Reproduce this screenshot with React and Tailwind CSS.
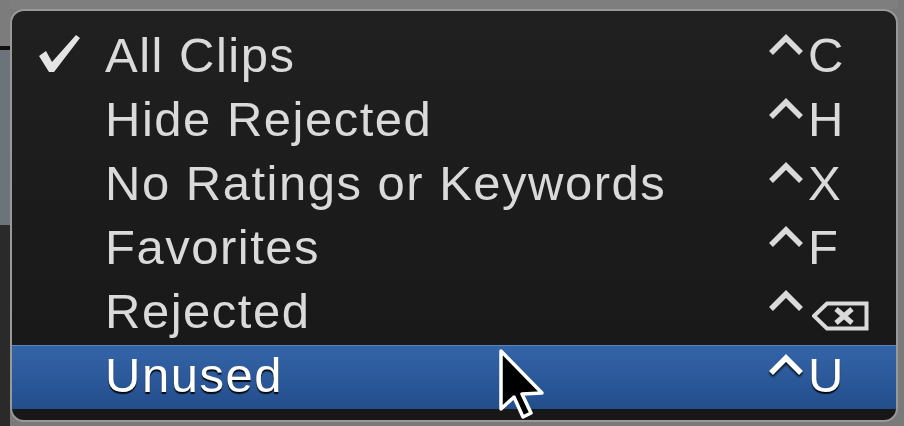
import React from "react";

const font = { fontFamily: '"Liberation Sans", Arial, sans-serif' };

function Caret() {
  return (
    <svg width="36" height="22" viewBox="0 0 36 22" className="block">
      <path d="M3 19 L18 4 L33 19" fill="none" stroke="currentColor" strokeWidth="5.5" strokeLinejoin="miter" />
    </svg>
  );
}

function DeleteKey() {
  return (
    <svg width="58" height="30" viewBox="0 0 58 30" className="block">
      <path d="M2 15 L15 2.5 L54.5 2.5 L54.5 27.5 L15 27.5 Z" fill="none" stroke="currentColor" strokeWidth="4" strokeLinejoin="miter" />
      <path d="M24 8 L40 22 M40 8 L24 22" fill="none" stroke="currentColor" strokeWidth="5" />
    </svg>
  );
}

function Check() {
  return (
    <svg width="44" height="44" viewBox="0 0 44 44" className="block">
      <path d="M1 22 L8 17 L14 28 L38 1 L42 4 L16 38 L11 38 Z" fill="#e4e4e4" />
    </svg>
  );
}

function Row({ label, keyNode, checked, selected }) {
  return (
    <div
      className={
        "flex h-[64px] items-start " +
        (selected
          ? "bg-gradient-to-b from-[#3464a8] to-[#234e8c] border-t border-[#5f84bc] text-white"
          : "text-[#dadada]")
      }
    >
      <div className="w-[93px] shrink-0 flex items-start pl-[26px] pt-[9px]">
        {checked ? <Check /> : null}
      </div>
      <div
        className={"flex-1 text-[49px] leading-[60px] tracking-[1.5px] whitespace-nowrap " + (selected ? "-mt-px" : "")}
        style={selected ? { textShadow: "0 2px 1px rgba(0,0,0,0.9)" } : undefined}
      >
        {label}
      </div>
      <div className={"w-[128px] shrink-0 flex items-start " + (selected ? "-mt-px" : "")}>
        <div className="pt-[9px] w-[40px]" style={selected ? { filter: "drop-shadow(0 2px 1px rgba(0,0,0,0.9))" } : undefined}>
          <Caret />
        </div>
        <div
          className="text-[49px] leading-[60px]"
          style={selected ? { textShadow: "0 2px 1px rgba(0,0,0,0.9)" } : undefined}
        >
          {keyNode}
        </div>
      </div>
    </div>
  );
}

export default function App() {
  const rows = [
    { label: "All Clips", key: "C", checked: true },
    { label: "Hide Rejected", key: "H" },
    { label: "No Ratings or Keywords", key: "X" },
    { label: "Favorites", key: "F" },
    { label: "Rejected", key: "del" },
    { label: "Unused", key: "U", selected: true },
  ];
  return (
    <div className="w-[904px] h-[426px] overflow-hidden bg-[#7a7a7a] flex" style={font}>
      <div className="w-[10px] shrink-0 flex flex-col">
        <div className="h-[46px] bg-[#7c7c7c]" />
        <div className="h-[4px] bg-[#101010]" />
        <div className="h-[175px] bg-[#6c737b]" />
        <div className="flex-1 bg-[#2a2a2a]" />
      </div>
      <div className="flex flex-col">
        <div className="h-[9px] bg-[#7e7e7e]" />
        <div className="relative w-[888px] h-[413px] rounded-[14px] border-2 border-[#999999] bg-gradient-to-b from-[#202020] to-[#171717] overflow-hidden pt-[14px] pb-[11px]">
          {rows.map((r) => (
            <Row
              key={r.label}
              label={r.label}
              checked={r.checked}
              selected={r.selected}
              keyNode={r.key === "del" ? <div className="pt-[20px] ml-[4px]"><DeleteKey /></div> : r.key}
            />
          ))}
          <svg
            className="absolute left-[486px] top-[337px]"
            width="50"
            height="72"
            viewBox="-3 -3 50 72"
          >
            <path
              d="M0 0 L0 58 L13 46 L22 66 L30 62 L21 43 L41 42 Z"
              fill="#000"
              stroke="#fff"
              strokeWidth="3.5"
              strokeLinejoin="round"
            />
          </svg>
        </div>
      </div>
    </div>
  );
}
